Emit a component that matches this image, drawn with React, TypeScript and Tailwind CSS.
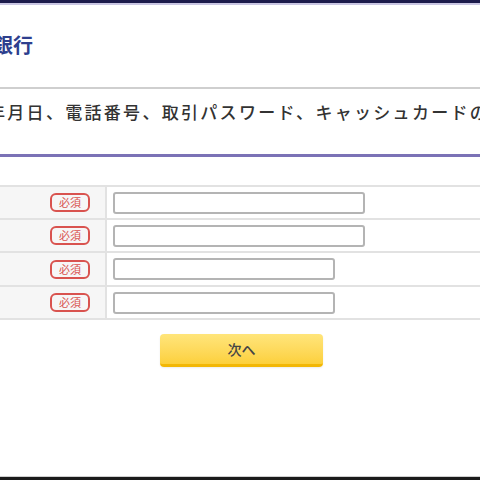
import React from "react";

const rows = [
  { w: "w-[252px]", h: "h-[33px]" },
  { w: "w-[252px]", h: "h-[33px]" },
  { w: "w-[222px]", h: "h-[34px]" },
  { w: "w-[222px]", h: "h-[33px]" },
];

function Required() {
  return (
    <span className="flex h-[19px] w-[40px] items-center justify-center rounded-[6px] border-2 border-[#d9534f] text-[11px] leading-none text-[#d9534f]">
      必須
    </span>
  );
}

export default function App() {
  return (
    <div
      className="flex h-[480px] w-[480px] flex-col overflow-hidden bg-white"
      style={{ fontFamily: '"Noto Sans CJK JP", "Noto Sans", sans-serif' }}
    >
      <div className="h-[3px] shrink-0 bg-[#1c1c4c]" />
      <div className="h-[2px] shrink-0 bg-[#c9c6e3]" />

      <div className="flex h-[84px] shrink-0 items-center border-b-2 border-[#cfcfcf] pb-[2px]">
        <h1 className="ml-[-7px] whitespace-nowrap text-[20px] font-bold leading-none text-[#2e3f8e]">
          銀行
        </h1>
      </div>

      <div className="flex h-[68px] shrink-0 items-start overflow-hidden border-b-[3px] border-[#7b72b6] pt-[10px]">
        <p className="ml-[-12px] whitespace-nowrap text-[17px] font-medium tracking-[2.3px] text-[#333]">
          年月日、電話番号、取引パスワード、キャッシュカードの暗証番号を入力してください。
        </p>
      </div>

      <div className="mt-[28px] flex shrink-0 flex-col border-t-2 border-[#e2e2e2]">
        {rows.map((r, i) => (
          <div
            key={i}
            className={`flex ${r.h} border-b-2 border-[#e2e2e2]`}
          >
            <div className="flex w-[107px] items-center justify-end border-r-2 border-[#e2e2e2] bg-[#f6f6f6] pr-[15px]">
              <Required />
            </div>
            <div className="flex flex-1 items-center pl-[6px]">
              <div
                className={`${r.w} h-[22px] rounded-[3px] border-2 border-[#b4b4b4] bg-white`}
              />
            </div>
          </div>
        ))}
      </div>

      <div className="mt-[14px] flex justify-center">
        <button className="ml-[3px] flex h-[33px] w-[163px] items-center justify-center rounded-[4px] border-b-[3px] border-[#f2b705] bg-gradient-to-b from-[#ffe57a] to-[#fcd03a] text-[14px] font-medium text-[#444] shadow-[0_1px_2px_rgba(0,0,0,0.08)]">
          次へ
        </button>
      </div>

      <div className="flex-1" />
      <div className="h-[1px] shrink-0 bg-[#cfcfcf]" />
      <div className="h-[3px] shrink-0 bg-[#1a1a1a]" />
    </div>
  );
}
